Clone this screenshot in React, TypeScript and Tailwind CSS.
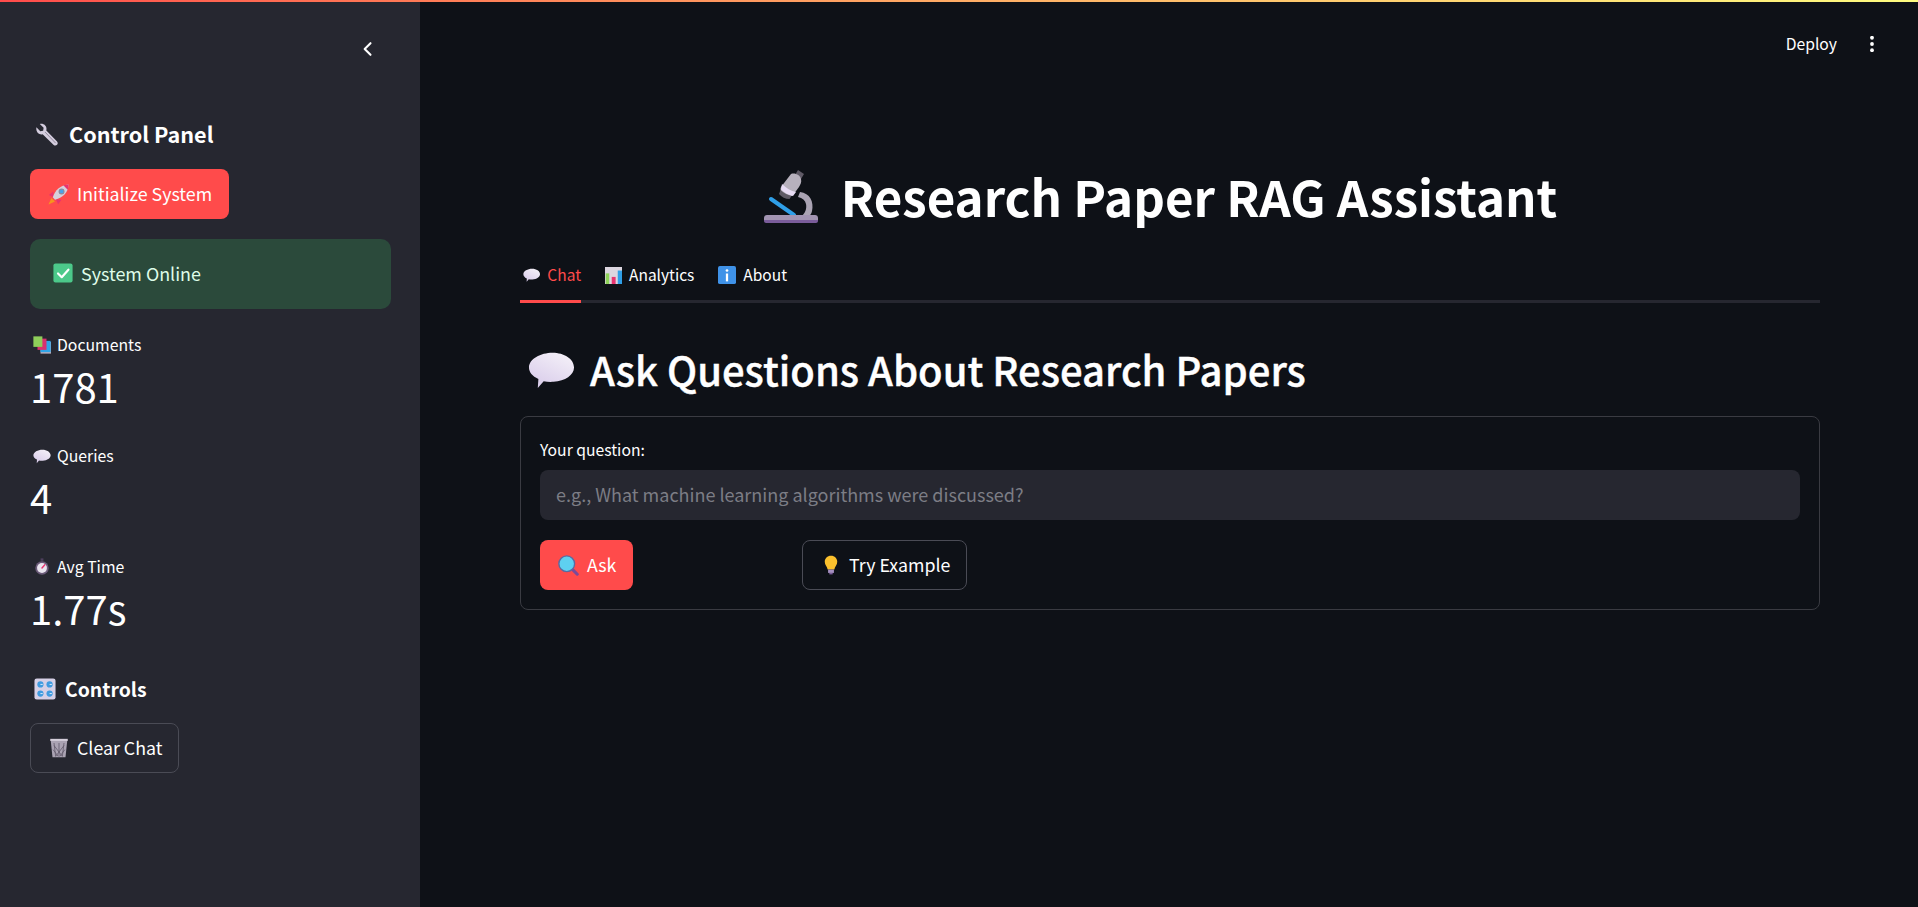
import type { ReactNode } from 'react'

type IconProps = { className?: string }

function Wrench({ className }: IconProps) {
  return (
    <svg viewBox="0 0 24 24" className={className}>
      <path d="M1.500 4.500 5.500 8.500 8.500 8 9 5 5 1C8.500-.2 12 2.500 12 6c0 .6-.1 1.200-.2 1.700l11 11.300c1.200 1.300 1.200 2.700.2 3.800-1.100 1-2.600 1-3.800-.2L8 11.800C4.500 12.800.5 9.500 1.500 4.500Z" fill="#d4cdde" />
      <path d="M10.500 9.500 21.500 21" stroke="#8f8799" strokeWidth="1" fill="none" />
    </svg>
  )
}

function Rocket({ className }: IconProps) {
  return (
    <svg viewBox="0 0 24 24" className={className}>
      <path d="M4 16 .5 23.500 8 20Z" fill="#f7941e" />
      <path d="M6 8.500 1 12.500l5.500 2.500ZM15.500 18l-4 5-2.500-5.500Z" fill="#e8336f" />
      <path d="M8 18 5.500 15C8 7 14 1.500 23.500.5c-.5 9-6 15-15.500 17.500Z" fill="#d6d0dc" />
      <path d="M17.500 1.500 23.500.5c0 2-.3 4-1 6Z" fill="#e8336f" />
      <circle cx="15.500" cy="8.500" r="2.800" fill="#4aa3e8" stroke="#8f8799" strokeWidth="1.200" />
    </svg>
  )
}

function CheckBox({ className }: IconProps) {
  return (
    <svg viewBox="0 0 24 24" className={className}>
      <rect x="0.500" y="0.500" width="23" height="23" rx="2.500" fill="#4cc98a" />
      <path d="M6 12.500 10.500 17 18.500 8" stroke="#fff" strokeWidth="2.600" fill="none" strokeLinecap="round" strokeLinejoin="round" />
    </svg>
  )
}

function Books({ className }: IconProps) {
  return (
    <svg viewBox="0 0 24 24" className={className}>
      <rect x="10" y="8" width="14" height="15.500" fill="#b4acbc" />
      <rect x="10" y="6.500" width="13.500" height="15" fill="#2fa4e7" />
      <rect x="6" y="3.500" width="12" height="15" fill="#d9316f" />
      <rect x="0.500" y="0.500" width="12" height="14" fill="#8fce5a" />
    </svg>
  )
}

function Speech({ className }: IconProps) {
  return (
    <svg viewBox="0 0 24 24" className={className}>
      <defs>
        <linearGradient id="speech-fill" x1="0.800" y1="0" x2="0.200" y2="1">
          <stop offset="0" stopColor="#f4f0f8" />
          <stop offset="1" stopColor="#d8cbea" />
        </linearGradient>
      </defs>
      <path d="M12.500 3.500C18.500 3.500 23.500 6.700 23.500 11c0 3.800-4.500 6.900-10.500 7.300-2 .1-3.500 0-5-.3L5 21.500 5.300 16.800C2.200 15.500.5 13.300.5 11 .5 6.700 6.500 3.500 12.500 3.500Z" fill="url(#speech-fill)" />
    </svg>
  )
}

function Stopwatch({ className }: IconProps) {
  return (
    <svg viewBox="0 0 24 24" className={className}>
      <rect x="10" y="0.500" width="4" height="3.500" fill="#4d3f5c" />
      <circle cx="12" cy="14" r="9.500" fill="#6a5a78" />
      <circle cx="12" cy="14" r="7" fill="#e9e4ee" />
      <path d="M12 14 16 9.500" stroke="#e8336f" strokeWidth="2" strokeLinecap="round" />
    </svg>
  )
}

function Knobs({ className }: IconProps) {
  return (
    <svg viewBox="0 0 24 24" className={className}>
      <rect x="0.500" y="0.500" width="23" height="23" rx="2.500" fill="#d6d0e6" />
      {[7, 17].flatMap((y) =>
        [7, 17].map((x) => (
          <g key={`${x}-${y}`}>
            <circle cx={x} cy={y} r="3.400" fill="#3f9be0" />
            <path d={`M${x} ${y}h2.500`} stroke="#e6f2fb" strokeWidth="1" />
          </g>
        )),
      )}
    </svg>
  )
}

function Bin({ className }: IconProps) {
  return (
    <svg viewBox="0 0 24 24" className={className}>
      <path d="M2 2h20l-2.200 21H4.200Z" fill="#aaa3b3" />
      <path d="M1.500 1h21v2.500h-21Z" fill="#d3cdd9" />
      <path d="M6 6l2 16M12 6v16M18 6l-2 16M6 9l10 13M18 9 8 22M5 14l6 8M19 14l-6 8" stroke="#5c5566" strokeWidth=".9" fill="none" />
    </svg>
  )
}

function Microscope({ className }: IconProps) {
  return (
    <svg viewBox="0 0 56 56" className={className}>
      <path d="M37 24c10 1 14 10 12 19-.5 2.500-1.500 4-3 5h-7c3-3 5-7 4-12-.7-3.500-3.500-6-8-7Z" fill="#aaa3b3" />
      <path d="M8 31 31 47" stroke="#2f9fe8" strokeWidth="4" strokeLinecap="round" />
      <path d="M1 50c0-1.700 1.300-3 3-3h48c1.700 0 3 1.300 3 3v3H1Z" fill="#a294b2" />
      <path d="M1 52h54v1c0 1-1 2-2 2H3c-1 0-2-1-2-2Z" fill="#7a5c9a" />
      <path d="m35 2 6 4-3 5-6-4Z" fill="#5f5a66" />
      <path d="M28 6c4-1.500 9 1 10 5 .8 3-.5 5.500-2 8-2.500 3.500-5 7-7 9-3 .5-7-1-9.500-3-2-1.500-2.500-4-1.500-6Z" fill="#b7b1bd" />
      <path d="M19 16c4 4 9 7 14 8l-3 4c-4-1-9-3-12-6.500Z" fill="#e8dcf5" />
      <path d="M17.500 22c3 3 7 5 11 6l-2 3c-4 0-8-2-10.500-5Z" fill="#5f5a66" />
    </svg>
  )
}

function BarChart({ className }: IconProps) {
  return (
    <svg viewBox="0 0 24 24" className={className}>
      <rect x="0" y="0" width="24" height="24" fill="#dcd6e0" />
      <rect x="1" y="9" width="5" height="15" fill="#8fd45a" />
      <rect x="9.500" y="14" width="5.500" height="10" fill="#e8336f" />
      <rect x="18" y="5" width="6" height="19" fill="#2f9fe8" />
    </svg>
  )
}

function InfoBox({ className }: IconProps) {
  return (
    <svg viewBox="0 0 24 24" className={className}>
      <rect x="0" y="0" width="24" height="24" rx="2.500" fill="#3f92e8" />
      <circle cx="12" cy="6" r="1.800" fill="#fff" />
      <rect x="10.500" y="10" width="3" height="10.500" fill="#fff" />
    </svg>
  )
}

function Magnifier({ className }: IconProps) {
  return (
    <svg viewBox="0 0 24 24" className={className}>
      <path d="M15 15 22 22" stroke="#7a4a9a" strokeWidth="3.500" strokeLinecap="round" />
      <circle cx="10" cy="10" r="9" fill="#5ed0f0" stroke="#5a6aa0" strokeWidth="1.600" />
    </svg>
  )
}

function Bulb({ className }: IconProps) {
  return (
    <svg viewBox="0 0 24 24" className={className}>
      <path d="M12 1c4.500 0 7.500 3.200 7.500 7.200 0 3.800-3 5.800-3.500 9.300H8c-.5-3.500-3.500-5.500-3.500-9.300C4.500 4.200 7.500 1 12 1Z" fill="#fbc02d" />
      <rect x="8.500" y="17.500" width="7" height="4" fill="#a58fc0" />
      <rect x="10" y="21.500" width="4" height="1.800" fill="#7a5c9a" />
    </svg>
  )
}

function Button({ primary, icon, children, className }: { primary?: boolean; icon: ReactNode; children: ReactNode; className?: string }) {
  return (
    <button
      className={`flex h-[50px] items-center gap-[8px] rounded-lg pl-[18px] text-[17.8px] leading-none whitespace-nowrap text-white ${
        primary ? 'bg-[#ff4b4b]' : 'border border-[#4a4b55]'
      } ${className ?? ''}`}
    >
      {icon}
      <span className="pb-[1px]">{children}</span>
    </button>
  )
}

function Metric({ icon, label, value }: { icon: ReactNode; label: string; value: string }) {
  return (
    <div className="h-[111px]">
      <div className="flex h-[23px] items-center gap-[6px] pl-[3px] text-[15.8px] text-white">
        {icon}
        {label}
      </div>
      <div className="mt-[2px] text-[40px] leading-[56px] text-white">{value}</div>
    </div>
  )
}

function Sidebar() {
  return (
    <aside className="relative flex w-[420px] shrink-0 flex-col bg-[#262730] pt-[118px] pr-[29px] pl-[30px]">
      <svg viewBox="0 0 24 24" className="absolute top-[39px] left-[358px] h-[20px] w-[20px]" fill="none" stroke="#fff" strokeWidth="2.500" strokeLinecap="round" strokeLinejoin="round">
        <path d="M15 5 8 12l7 7" />
      </svg>
      <h3 className="flex h-[32px] items-center gap-[11px] pl-[5px] text-[21.6px] font-semibold text-white">
        <Wrench className="h-[23px] w-[23px]" />
        Control Panel
      </h3>
      <Button primary className="mt-[19px] w-[199px]" icon={<Rocket className="h-[21px] w-[21px]" />}>
        Initialize System
      </Button>
      <div className="mt-[20px] flex h-[70px] items-center gap-[8px] rounded-[10px] bg-[#2b4a3b] pb-[2px] pl-[23px] text-[17.9px] text-[#dffde9]">
        <CheckBox className="h-[20px] w-[20px]" />
        System Online
      </div>
      <div className="mt-[24px]">
        <Metric icon={<Books className="h-[18px] w-[18px]" />} label="Documents" value="1781" />
        <Metric icon={<Speech className="h-[18px] w-[18px]" />} label="Queries" value="4" />
        <Metric icon={<Stopwatch className="h-[17px] w-[18px]" />} label="Avg Time" value="1.77s" />
      </div>
      <h3 className="mt-[9px] flex h-[28px] items-center gap-[9px] pl-[4px] text-[19.4px] font-semibold text-white">
        <Knobs className="h-[22px] w-[22px]" />
        Controls
      </h3>
      <Button className="mt-[20px] w-[149px] bg-[#262730]" icon={<Bin className="h-[20px] w-[20px]" />}>
        Clear Chat
      </Button>
    </aside>
  )
}

function Main() {
  return (
    <main className="relative min-w-0 flex-1 bg-[#0e1117] pt-[160px] pr-[98px] pl-[100px]">
      <div className="absolute top-[36px] right-[38px] flex items-center gap-[27px] text-[15.7px] leading-[16px] text-white">
        <span>Deploy</span>
        <svg viewBox="0 0 16 16" className="h-[16px] w-[16px]" fill="#fff">
          <circle cx="8" cy="1.800" r="1.900" />
          <circle cx="8" cy="8" r="1.900" />
          <circle cx="8" cy="14.200" r="1.900" />
        </svg>
      </div>

      <h1 className="flex h-[72px] items-center justify-center gap-[22px] pr-[20px] text-[49.25px] font-bold text-white">
        <Microscope className="h-[56px] w-[56px]" />
        Research Paper RAG Assistant
      </h1>

      <div className="mt-[21px] flex h-[50px] gap-[24px] border-b-[3px] border-[#262730] text-[15.5px] text-white">
        <div className="flex h-[50px] w-[61px] items-center gap-[7px] border-b-[3px] border-[#ff4b4b] pb-[3px] pl-[3px] text-[#ff4b4b]">
          <Speech className="h-[18px] w-[18px]" />
          Chat
        </div>
        <div className="flex h-[47px] items-center gap-[7px] pb-[3px]">
          <BarChart className="h-[17px] w-[17px]" />
          Analytics
        </div>
        <div className="flex h-[47px] items-center gap-[7px] pb-[3px]">
          <InfoBox className="h-[18px] w-[18px]" />
          About
        </div>
      </div>

      <h2 className="mt-[40px] flex h-[52px] items-center gap-[15px] pl-[8px] text-[40px] font-medium text-white [-webkit-text-stroke:0.4px_#fff]">
        <Speech className="h-[47px] w-[47px]" />
        Ask Questions About Research Papers
      </h2>

      <div className="mt-[21px] rounded-lg border border-[#3a3b42] px-[19px] pt-[23px] pb-[19px]">
        <label className="block h-[20px] text-[15.7px] leading-[20px] text-white">Your question:</label>
        <div className="mt-[10px] flex h-[50px] items-center rounded-lg bg-[#262730] pb-[2px] pl-[16px] text-[18px] text-[#7c7d85]">
          e.g., What machine learning algorithms were discussed?
        </div>
        <div className="mt-[20px] grid grid-cols-[246px_auto] gap-[16px]">
          <Button primary className="w-[93px]" icon={<Magnifier className="h-[21px] w-[21px]" />}>
            Ask
          </Button>
          <Button className="w-[165px]" icon={<Bulb className="h-[20px] w-[20px]" />}>
            Try Example
          </Button>
        </div>
      </div>
    </main>
  )
}

export default function App() {
  return (
    <div className="relative flex h-[907px] overflow-hidden font-['Noto_Sans_CJK_SC','Liberation_Sans',sans-serif]">
      <div className="absolute top-0 right-0 left-0 z-10 h-[2px] bg-gradient-to-r from-[#ff4b4b] to-[#fffd80]" />
      <Sidebar />
      <Main />
    </div>
  )
}
